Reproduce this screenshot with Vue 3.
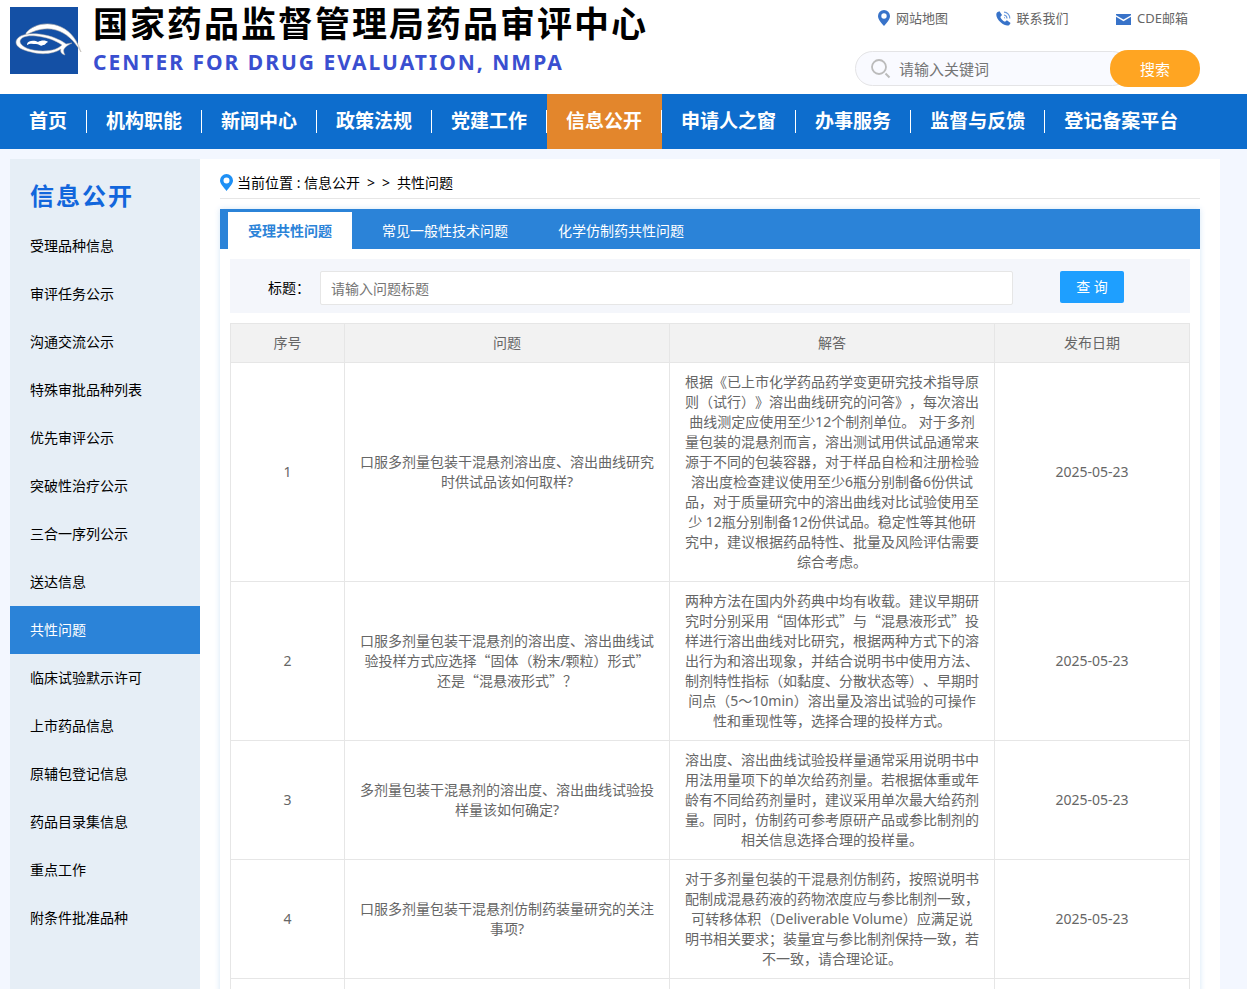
<script setup>
import { ref } from 'vue'

const navItems = [
  '首页', '机构职能', '新闻中心', '政策法规', '党建工作',
  '信息公开', '申请人之窗', '办事服务', '监督与反馈', '登记备案平台',
]
const activeNav = ref('信息公开')

const sideItems = [
  '受理品种信息', '审评任务公示', '沟通交流公示', '特殊审批品种列表', '优先审评公示',
  '突破性治疗公示', '三合一序列公示', '送达信息', '共性问题', '临床试验默示许可',
  '上市药品信息', '原辅包登记信息', '药品目录集信息', '重点工作', '附条件批准品种',
]
const activeSide = ref('共性问题')

const tabs = ['受理共性问题', '常见一般性技术问题', '化学仿制药共性问题']
const activeTab = ref('受理共性问题')

const keyword = ref('')
const title = ref('')

const rows = [
  {
    id: 1,
    question: '口服多剂量包装干混悬剂溶出度、溶出曲线研究时供试品该如何取样?',
    answer: '根据《已上市化学药品药学变更研究技术指导原则（试行）》溶出曲线研究的问答》，每次溶出曲线测定应使用至少12个制剂单位。 对于多剂量包装的混悬剂而言，溶出测试用供试品通常来源于不同的包装容器，对于样品自检和注册检验溶出度检查建议使用至少6瓶分别制备6份供试品，对于质量研究中的溶出曲线对比试验使用至少 12瓶分别制备12份供试品。稳定性等其他研究中，建议根据药品特性、批量及风险评估需要综合考虑。',
    date: '2025-05-23',
  },
  {
    id: 2,
    question: '口服多剂量包装干混悬剂的溶出度、溶出曲线试验投样方式应选择“固体（粉末/颗粒）形式”\n还是“混悬液形式”？',
    answer: '两种方法在国内外药典中均有收载。建议早期研究时分别采用“固体形式”与“混悬液形式”投样进行溶出曲线对比研究，根据两种方式下的溶出行为和溶出现象，并结合说明书中使用方法、制剂特性指标（如黏度、分散状态等）、早期时间点（5～10min）溶出量及溶出试验的可操作性和重现性等，选择合理的投样方式。',
    date: '2025-05-23',
  },
  {
    id: 3,
    question: '多剂量包装干混悬剂的溶出度、溶出曲线试验投样量该如何确定?',
    answer: '溶出度、溶出曲线试验投样量通常采用说明书中用法用量项下的单次给药剂量。若根据体重或年龄有不同给药剂量时，建议采用单次最大给药剂量。同时，仿制药可参考原研产品或参比制剂的相关信息选择合理的投样量。',
    date: '2025-05-23',
  },
  {
    id: 4,
    question: '口服多剂量包装干混悬剂仿制药装量研究的关注事项?',
    answer: '对于多剂量包装的干混悬剂仿制药，按照说明书配制成混悬药液的药物浓度应与参比制剂一致，可转移体积（Deliverable Volume）应满足说\n明书相关要求；装量宜与参比制剂保持一致，若不一致，请合理论证。',
    date: '2025-05-23',
  },
]

// Curly quotes are set in the CJK face so that they take a full-width cell.
const pieces = (text) => text.split(/([“”])/).filter(Boolean)
const isQuote = (piece) => piece === '“' || piece === '”'
</script>

<template>
  <div class="page">
    <header class="header">
      <div class="brand">
        <svg class="logo" viewBox="0 0 73 67" aria-hidden="true">
          <rect width="68" height="67" fill="#1450a5" />
          <path d="M16 26C23 17 39 14 51 20C62 25 67 34 71 45C64 33 56 26 46 23C35 20 25 23 16 28Z" fill="#fff" stroke="#b9b3ad" stroke-width=".6" />
          <path fill-rule="evenodd" d="M6 35C7 27 21 25 35 28C45 30 52 34 56 37L62 36C58 38 55 40 54 42C53 44 54 46 55 48C51 47 50 44 51 42C44 47 31 48 21 45C12 43 6 40 6 35ZM10 35C11 40 21 44 33 44C43 44 49 41 52 38C45 33 36 30 26 29C17 28 10 30 10 35Z" fill="#fff" stroke="#b9b3ad" stroke-width=".5" />
          <path d="M17 37C18 33 25 33 28 35C31 33 36 33 38 35C35 36 36 38 33 38C31 40 29 37 26 37C23 37 20 36 17 38Z" fill="#fff" />
        </svg>
        <div>
          <h1 class="brand-cn">国家药品监督管理局药品审评中心</h1>
          <p class="brand-en">CENTER FOR DRUG EVALUATION, NMPA</p>
        </div>
      </div>
      <div class="tools">
        <div class="quick-links">
          <a href="#map">
            <svg width="12" height="16" viewBox="0 0 12 16" aria-hidden="true">
              <path fill-rule="evenodd" d="M6 0a6 6 0 0 1 6 6c0 3-3 7-6 10C3 13 0 9 0 6a6 6 0 0 1 6-6Zm0 3.300a2.700 2.700 0 1 0 0 5.400a2.700 2.700 0 0 0 0-5.400Z" fill="#3873c9" />
            </svg>
            网站地图
          </a>
          <a href="#contact">
            <svg width="15" height="15" viewBox="0 0 15 15" aria-hidden="true">
              <path d="M1.200 1.300L3.500.200L6 4L4.300 5.900C5 7.900 6.800 9.800 9 10.800L10.900 9.300L14.600 11.900L13.300 14.100C11.800 15.200 8 14.600 4.600 11.300C.8 7.700-.9 3.500 1.200 1.300Z" fill="#3873c9" />
              <path d="M8 4a3.500 3.500 0 0 1 3 3.500M8 1.200a6 6 0 0 1 5.800 6.300" fill="none" stroke="#6f9bdb" stroke-width="1.200" />
              <path d="M8 6.300l1.100 1" stroke="#6f9bdb" />
            </svg>
            联系我们
          </a>
          <a href="#mail">
            <svg class="mail" width="15" height="11" viewBox="0 0 15 11" aria-hidden="true">
              <path d="M0 0h15v1.200L7.500 5.500L0 1.200Z M0 2.800L7.500 7.200L15 2.800V11H0Z" fill="#3873c9" />
            </svg>
            CDE邮箱
          </a>
        </div>
        <form class="site-search" @submit.prevent>
          <label class="search-box">
            <svg width="20" height="20" viewBox="0 0 20 20" aria-hidden="true">
              <circle cx="8" cy="8" r="7" fill="none" stroke="#bbb" stroke-width="1.800" />
              <path d="M14.500 14.500L18.500 18.500" stroke="#bbb" stroke-width="2" />
            </svg>
            <input v-model="keyword" type="text" aria-label="请输入关键词" placeholder="请输入关键词" />
          </label>
          <button type="submit">搜索</button>
        </form>
      </div>
    </header>

    <nav class="nav">
      <a
        v-for="item in navItems"
        :key="item"
        href="#nav"
        :class="{ active: item === activeNav }"
        @click.prevent="activeNav = item"
      >{{ item }}</a>
    </nav>

    <div class="content">
      <aside class="side">
        <h2>信息公开</h2>
        <a
          v-for="item in sideItems"
          :key="item"
          href="#side"
          :class="{ active: item === activeSide }"
          @click.prevent="activeSide = item"
        >{{ item }}</a>
      </aside>

      <main class="main">
        <div class="crumbs">
          <svg width="13" height="17" viewBox="0 0 13 17" aria-hidden="true">
            <path fill-rule="evenodd" d="M6.500 0A6.500 6.500 0 0 1 13 6.500C13 10 9.500 13 6.500 17C3.500 13 0 10 0 6.500A6.500 6.500 0 0 1 6.500 0Zm0 3.500a3 3 0 1 0 0 6a3 3 0 0 0 0-6Z" fill="#1e90f5" />
          </svg>
          <span>当前位置 : 信息公开</span>
          <span>&gt;</span>
          <span>&gt;</span>
          <span>共性问题</span>
        </div>

        <section class="panel">
          <div class="tabs" role="tablist">
            <button
              v-for="tab in tabs"
              :key="tab"
              type="button"
              role="tab"
              :aria-selected="tab === activeTab"
              :class="{ active: tab === activeTab }"
              @click="activeTab = tab"
            >{{ tab }}</button>
          </div>

          <div class="panel-body">
            <form class="filter" @submit.prevent>
              <label for="title">标题：</label>
              <input id="title" v-model="title" type="text" placeholder="请输入问题标题" />
              <button type="submit">查 询</button>
            </form>

            <table>
              <colgroup>
                <col class="col-no" />
                <col />
                <col />
                <col class="col-date" />
              </colgroup>
              <thead>
                <tr>
                  <th>序号</th>
                  <th>问题</th>
                  <th>解答</th>
                  <th>发布日期</th>
                </tr>
              </thead>
              <tbody>
                <tr v-for="row in rows" :key="row.id">
                  <td>{{ row.id }}</td>
                  <td><template v-for="(p, i) in pieces(row.question)" :key="i"><span v-if="isQuote(p)" class="quote">{{ p }}</span><template v-else>{{ p }}</template></template></td>
                  <td><template v-for="(p, i) in pieces(row.answer)" :key="i"><span v-if="isQuote(p)" class="quote">{{ p }}</span><template v-else>{{ p }}</template></template></td>
                  <td>{{ row.date }}</td>
                </tr>
                <tr class="next-row">
                  <td></td>
                  <td></td>
                  <td></td>
                  <td></td>
                </tr>
              </tbody>
            </table>
          </div>
        </section>
      </main>
    </div>
  </div>
</template>

<style>
body {
  margin: 0;
  background: #f3f7ff;
}
</style>

<style scoped>
.page {
  display: flex;
  flex-direction: column;
  height: 100vh;
  overflow: hidden;
  font: 14px/20px "Noto Sans", "Noto Sans CJK SC", sans-serif;
  text-spacing-trim: space-all;
  color: #000;
}
.page * {
  box-sizing: border-box;
}
a {
  text-decoration: none;
  color: inherit;
}
button,
input {
  font: inherit;
}
button {
  border: 0;
  cursor: pointer;
}
.header {
  flex: none;
  display: grid;
  grid-template-columns: 1fr 345px;
  height: 94px;
  padding: 0 47px 0 10px;
  background: #fff;
}
.brand {
  display: flex;
  gap: 10px;
  white-space: nowrap;
}
.logo {
  flex: none;
  width: 73px;
  height: 67px;
  margin-top: 7px;
}
.brand-cn {
  margin: 0;
  font-size: 35px;
  line-height: 48px;
  letter-spacing: 2px;
}
.brand-en {
  margin: 0;
  font-size: 21px;
  line-height: 28px;
  font-weight: 700;
  letter-spacing: 2px;
  color: #3a4fd0;
}
.tools {
  display: flex;
  flex-direction: column;
}
.quick-links {
  display: flex;
  justify-content: space-between;
  padding: 8px 12px 22px 23px;
  font-size: 13px;
  color: #666;
}
.quick-links a {
  display: flex;
  align-items: center;
  gap: 6px;
}
.mail {
  margin-top: 2px;
}
.site-search {
  display: flex;
  align-items: center;
}
.search-box {
  flex: 1;
  display: flex;
  align-items: center;
  gap: 8px;
  height: 35px;
  margin-right: -20px;
  padding-left: 15px;
  border: 1px solid #e4e4e6;
  border-radius: 18px;
  background: #f9faff;
}
.search-box input {
  flex: 1;
  min-width: 0;
  padding: 0;
  border: 0;
  outline: 0;
  background: none;
  font-size: 15px;
}
.site-search button {
  position: relative;
  width: 90px;
  height: 37px;
  border-radius: 18px;
  background: #ffa522;
  color: #fff;
  font-size: 15px;
}
input::placeholder {
  color: #757575;
  opacity: 1;
}
.nav {
  flex: none;
  display: flex;
  padding-left: 10px;
  background: #0d6dcd;
}
.nav a {
  display: flex;
  align-items: center;
  padding-left: 19px;
  font-size: 19px;
  line-height: 55px;
  font-weight: 700;
  color: #fff;
  white-space: nowrap;
}
.nav a::after {
  content: "";
  width: 1px;
  height: 23px;
  margin-left: 19px;
  background: #fff;
}
.nav a:last-child::after {
  visibility: hidden;
}
.nav .active {
  background: #e3862c;
}
.content {
  flex: 1;
  display: flex;
  min-height: 0;
  margin: 10px 27px 0 10px;
}
.side {
  flex: none;
  width: 190px;
  background: #e6eef6;
}
.side h2 {
  margin: 0;
  padding: 10px 20px 0;
  font-size: 24px;
  line-height: 53px;
  letter-spacing: 2px;
  color: #1266dc;
}
.side a {
  display: block;
  padding: 0 20px;
  line-height: 48px;
}
.side .active {
  background: #2b83d8;
  color: #fff;
}
.main {
  flex: 1;
  min-width: 0;
  padding: 0 20px;
  background: #fff;
}
.crumbs {
  display: flex;
  align-items: center;
  gap: 7px;
  height: 40px;
  padding-top: 8px;
  border-bottom: 1px solid #e6e6e6;
}
.crumbs svg {
  margin-right: -3px;
}
.panel {
  margin-top: 10px;
  box-shadow: 0 0 6px rgba(43, 131, 216, 0.2);
}
.tabs {
  display: flex;
  gap: 10px;
  padding: 3px 8px 0;
  background: #2b83d8;
}
.tabs button {
  height: 37px;
  padding: 0 20px;
  background: none;
  color: #fff;
}
.tabs .active {
  background: #fff;
  color: #2b83d8;
  font-weight: 700;
}
.panel-body {
  padding: 10px;
}
.filter {
  display: flex;
  align-items: flex-start;
  margin-bottom: 10px;
  padding: 12px 66px 8px 38px;
  background: #f4f6fb;
}
.filter label {
  width: 52px;
  line-height: 34px;
}
.filter input {
  flex: 1;
  min-width: 0;
  height: 34px;
  padding: 0 10px;
  border: 1px solid #e6e6e6;
  border-radius: 2px;
  background: #fff;
}
.filter button {
  width: 64px;
  height: 32px;
  margin-left: 47px;
  padding: 0;
  border-radius: 2px;
  background: #1e9fff;
  color: #fff;
}
table {
  width: 100%;
  table-layout: fixed;
  border-collapse: collapse;
  text-align: center;
  color: #666;
}
.col-no {
  width: 114px;
}
.col-date {
  width: 195px;
}
th,
td {
  padding: 9px 14px;
  border: 1px solid #e6e6e6;
  font-weight: 400;
  white-space: pre-line;
}
th {
  background: #f2f2f2;
}
.quote {
  font-family: "Noto Sans CJK SC", sans-serif;
  line-height: 16px;
}
.next-row td {
  height: 119px;
}
</style>
